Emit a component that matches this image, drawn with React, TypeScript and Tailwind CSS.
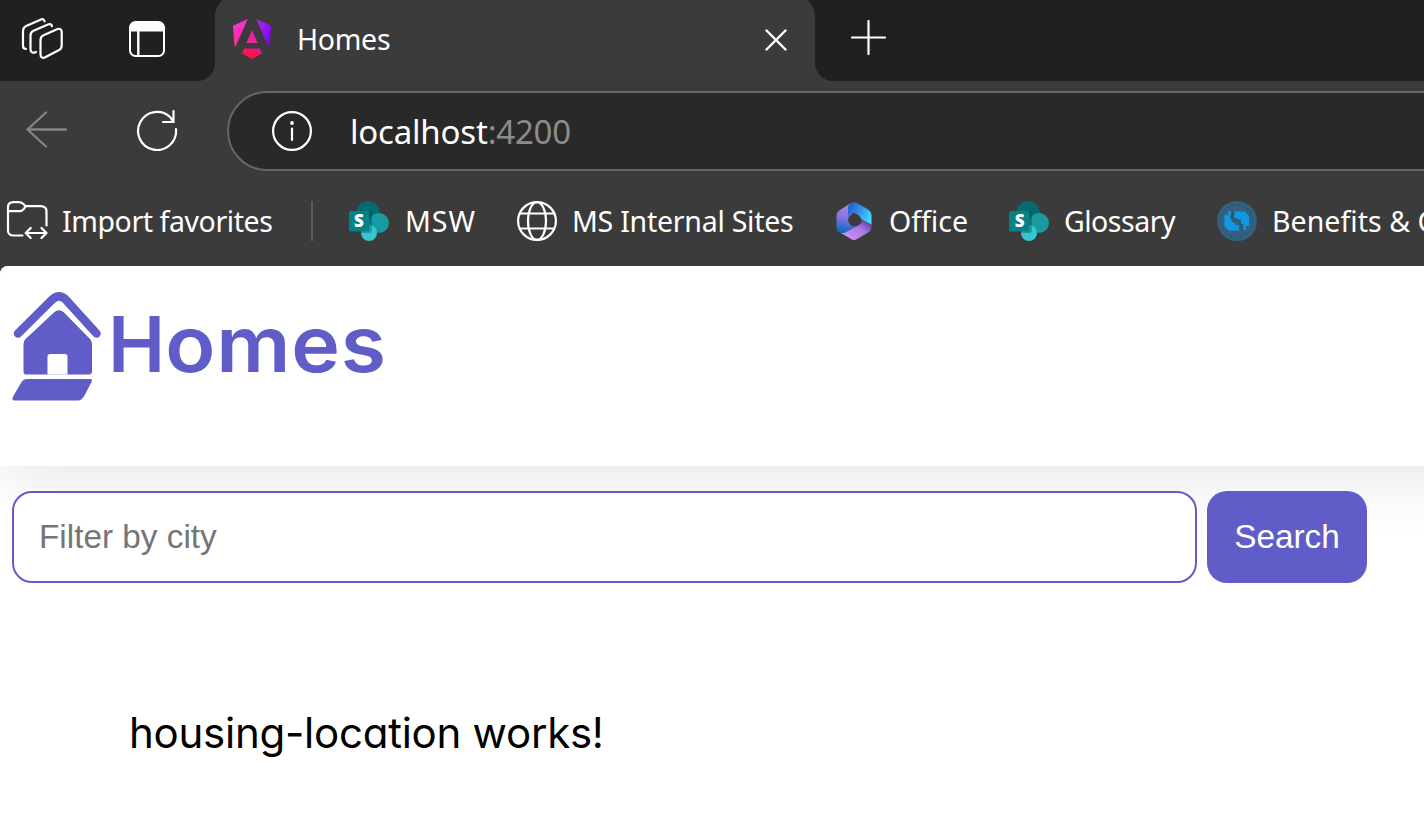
import React from "react";

function WorkspacesIcon() {
  return (
    <svg className="block shrink-0" width="42" height="42" viewBox="0 0 42 42" fill="none" stroke="white" strokeWidth="2.200" strokeLinecap="round" strokeLinejoin="round">
      <path d="M5 31C3 31 2 29.500 2 27.500V13c0-2.500 1-4 3.200-5L20 1.500c2-.8 3-.2 3.500 1.800" />
      <path d="M15 34c-2.500 1.500-5.500.5-5.500-2.500V17.500c0-2.300 1-3.800 3-4.700L27 6.500c2-.9 3.600-.4 4 1.700" />
      <path d="M19.500 22c0-2.300 1-3.900 3-4.800L36 11.200c2.700-1.200 4.700.2 4.700 2.900V27.500c0 2.300-1 3.800-3 4.700L24.200 39.300c-2.800 1.300-4.700 0-4.700-3z" />
    </svg>
  );
}

function VerticalTabsIcon() {
  return (
    <svg className="block shrink-0" width="36" height="36" viewBox="0 0 36 36" fill="none">
      <rect x="1" y="1" width="34" height="34" rx="5.500" stroke="white" strokeWidth="2" />
      <path d="M1 6.500C1 3 3 1 6.500 1h23C33 1 35 3 35 6.500V10.500H1z" fill="white" />
      <path d="M9.300 10v25" stroke="white" strokeWidth="2.400" />
    </svg>
  );
}

function AngularIcon() {
  return (
    <svg className="block shrink-0" width="38" height="40" viewBox="0 0 38 40">
      <defs>
        <linearGradient id="ng-a" x1="0" y1="0" x2=".3" y2="1">
          <stop offset="0" stopColor="#f637e8" />
          <stop offset="1" stopColor="#fa2a8a" />
        </linearGradient>
        <linearGradient id="ng-b" x1="0" y1="0" x2="1" y2="1">
          <stop offset="0" stopColor="#b62af0" />
          <stop offset="1" stopColor="#6c00f5" />
        </linearGradient>
        <linearGradient id="ng-c" x1="0" y1="1" x2="1" y2="0">
          <stop offset="0" stopColor="#ff0a58" />
          <stop offset=".6" stopColor="#fa1550" />
          <stop offset="1" stopColor="#c01abf" />
        </linearGradient>
        <linearGradient id="ng-d" x1="0" y1="1" x2="1" y2="0">
          <stop offset="0" stopColor="#fb2388" />
          <stop offset="1" stopColor="#d21fc0" />
        </linearGradient>
      </defs>
      <path d="M0 6.700L14.700 0 2.500 27.700 1.300 26z" fill="url(#ng-a)" />
      <path d="M23.300 0L38 6.700 36.700 26 35.500 27.700z" fill="url(#ng-b)" />
      <path d="M11 29.500H27L29 34.500 19 40 9 34.500z" fill="url(#ng-c)" />
      <path d="M19 11L24.700 24H13.300z" fill="url(#ng-d)" />
    </svg>
  );
}

function SharePointIcon() {
  return (
    <svg className="block shrink-0" width="40" height="40" viewBox="0 0 40 40">
      <circle cx="19" cy="11.500" r="11.500" fill="#036c70" />
      <circle cx="30" cy="22" r="10" fill="#1a9ba1" />
      <circle cx="20" cy="32" r="8" fill="#37c6d0" />
      <path d="M9 10h12.500a1.500 1.500 0 0 1 1.500 1.500V30a2 2 0 0 1-2 2H12z" fill="#000" opacity=".22" />
      <rect y="10" width="20.500" height="20.500" rx="1.500" fill="#038387" />
      <text x="10.300" y="26" textAnchor="middle" fontFamily="Open Sans, sans-serif" fontWeight="800" fontSize="17" fill="white">S</text>
    </svg>
  );
}

function GlobeIcon() {
  return (
    <svg className="block shrink-0" width="40" height="40" viewBox="0 0 40 40" fill="none" stroke="white" strokeWidth="2.200">
      <circle cx="20" cy="20" r="18.900" />
      <ellipse cx="20" cy="20" rx="9" ry="18.900" />
      <path d="M2.500 12.500h35M2.500 27.500h35" />
    </svg>
  );
}

function OfficeIcon() {
  return (
    <svg className="block shrink-0" width="36" height="38" viewBox="0 0 36 38">
      <defs>
        <linearGradient id="of-a" x1=".6" y1="0" x2=".5" y2="1">
          <stop offset="0" stopColor="#b58af0" />
          <stop offset=".5" stopColor="#8574dc" />
          <stop offset=".95" stopColor="#1268cc" />
        </linearGradient>
        <linearGradient id="of-b" x1="0" y1="0.200" x2="1" y2=".7">
          <stop offset="0" stopColor="#1f5fca" />
          <stop offset=".5" stopColor="#3894e8" />
          <stop offset="1" stopColor="#45dcff" />
        </linearGradient>
        <linearGradient id="of-c" x1="1" y1="0.100" x2=".2" y2=".8">
          <stop offset="0" stopColor="#4c358f" />
          <stop offset=".45" stopColor="#a676df" />
          <stop offset="1" stopColor="#c98ff5" />
        </linearGradient>
      </defs>
      <path d="M15 1L4 8Q.5 10 .5 14V25Q.5 29 4 30.500Q7 32 10 30L21 24 15 18 16 10z" fill="url(#of-a)" />
      <path d="M14 1.500Q18-.8 22 1.500L32 7.500Q35.500 9.500 35.500 14V23L25 17 18 10.500 12 14V6Q12 3 14 1.500z" fill="url(#of-b)" />
      <path d="M26 17.500L35.500 22.500V25Q35.500 28.500 32 30.500L21 37Q18 38.800 15 37L5 31Q8 31.500 11 29.500L22 23.500Q26 21.500 26 17.500z" fill="url(#of-c)" />
      <circle cx="18.500" cy="18" r="6.300" fill="#3b3b3b" />
    </svg>
  );
}

function BenefitsIcon() {
  return (
    <svg className="block shrink-0" width="40" height="40" viewBox="0 0 40 40">
      <circle cx="20" cy="20" r="20" fill="#34617f" />
      <circle cx="20" cy="20" r="16" fill="none" stroke="#2c587a" strokeWidth="1.500" strokeDasharray="3 2" />
      <path d="M15.500 10V16L18 19.500H22L25 23V30" fill="none" stroke="#2c587a" strokeWidth="3" />
      <g fill="#0a9be3">
        <path d="M14 10H11.500V14H7.500V25L11.500 29.500H22V24H18V21.500H14.500V18H13V14H14z" />
        <path d="M17.500 10.500H28L32 15.500V25H29V29H26.500V23H24V18.500H20.500V17H17V14.500H17.500z" />
      </g>
    </svg>
  );
}

function ImportIcon() {
  return (
    <svg className="block shrink-0" width="42" height="40" viewBox="0 0 42 40" fill="none" stroke="white" strokeWidth="2.200" strokeLinecap="round" strokeLinejoin="round">
      <path d="M16.500 34.500H7.500C4 34.500 2 32.500 2 29.500V6.500C2 3 4 1.200 7.500 1.200H13c2.500 0 3.800 1 5 2.300L19.700 5.200H34.500c4 0 6 2 6 5.500V24.500" />
      <path d="M2 10.200h12c1.500 0 2.500-.8 3.500-1.900L19.700 5.200" />
      <path d="M19.700 32H40.500M24.700 27L19.700 32 24.700 37M35.500 27L40.500 32 35.500 37" />
    </svg>
  );
}

function HomeLogo() {
  return (
    <svg className="block shrink-0" width="89" height="111" viewBox="0 0 89 111" fill="#605dc8">
      <path d="M6 42.500L40.500 8.300Q47 2.500 53.500 8.300L84.500 42.500" fill="none" stroke="#605dc8" strokeWidth="8.500" strokeLinecap="round" strokeLinejoin="round" />
      <path d="M42.500 21Q47 17.500 51.500 21L78 48Q80 50 80 53V80.500Q80 83.500 77 83.500H55.500V65.500Q55.500 63 53 63H38Q35.500 63 35.500 65.500V83.500H14Q11.500 83.500 11.500 80.500V53Q11.500 50 13.500 48z" />
      <path d="M35 83.500h21" stroke="#605dc8" strokeOpacity=".25" strokeWidth="1" />
      <path d="M15 88H78Q81 88 79.500 91L73 103.500Q70 109.500 66 109.500H3Q-.5 109.500 .8 106L9 92Q11 88 15 88z" />
    </svg>
  );
}

function Favorite({ icon, label, className }: { icon: React.ReactNode; label: string; className: string }) {
  return (
    <div className={`flex shrink-0 items-center ${className}`}>
      {icon}
      <span className="whitespace-nowrap pt-px">{label}</span>
    </div>
  );
}

export default function App() {
  return (
    <div className="flex h-[832px] w-[1424px] flex-col overflow-hidden bg-[#3b3b3b] font-['Noto_Sans',sans-serif] text-white">
      <div className="flex h-[81px] shrink-0">
        <div className="flex w-[215px] shrink-0 gap-[66px] rounded-br-[18px] bg-[#202020] pl-[21px]">
          <div className="pt-[18px]"><WorkspacesIcon /></div>
          <div className="pt-[21px]"><VerticalTabsIcon /></div>
        </div>
        <div className="w-[600px] shrink-0 overflow-hidden bg-[#202020]">
          <div className="-mt-1 flex h-[85px] items-center rounded-t-[20px] bg-[#3b3b3b] pl-[18px] pr-[28px]">
            <AngularIcon />
            <span className="ml-[26px] grow pt-0.5 text-[28.500px] leading-none tracking-[-0.3px]">Homes</span>
            <svg className="mt-0.5 block" width="22" height="22" viewBox="0 0 22 22" stroke="white" strokeWidth="2.400" strokeLinecap="round">
              <path d="M1.500 1.500l19 19M20.500 1.500l-19 19" />
            </svg>
          </div>
        </div>
        <div className="grow rounded-bl-[18px] bg-[#202020] pl-9 pt-5">
          <svg className="block" width="35" height="35" viewBox="0 0 35 35" stroke="white" strokeWidth="2.200" strokeLinecap="round">
            <path d="M1 17.500h33M17.500 1v33" />
          </svg>
        </div>
      </div>

      <div className="flex h-[90px] shrink-0 pt-[10px]">
        <div className="flex w-[227px] shrink-0 items-center gap-[68px] pl-[26px]">
          <svg className="-mt-1 block" width="42" height="37" viewBox="0 0 42 37" fill="none" stroke="#858585" strokeWidth="2.300" strokeLinecap="round" strokeLinejoin="round">
            <path d="M20 1.500L1.500 18.500 20 35.500M1.500 18.500H40" />
          </svg>
          <svg className="-mt-0.5 block" width="42" height="42" viewBox="0 0 42 42" fill="none" stroke="white" strokeWidth="2.200" strokeLinecap="round">
            <path d="M40 20A19 19 0 1 1 34.500 8.500L37 12.500M37.500 2V13H27" />
          </svg>
        </div>
        <div className="-mr-1 flex h-20 grow items-center rounded-l-full border-2 border-[#676767] bg-[#292929] pl-[43px]">
          <svg className="block" width="40" height="40" viewBox="0 0 40 40" fill="none" stroke="white" strokeWidth="2.200" strokeLinecap="round">
            <circle cx="20" cy="20" r="18.900" />
            <path d="M20 17.500v11.500" />
            <circle cx="20" cy="12" r="1.900" fill="white" stroke="none" />
          </svg>
          <span className="ml-[38px] text-[33px] leading-none tracking-[-0.2px]">localhost<span className="text-[#8c8c8c]">:4200</span></span>
        </div>
      </div>

      <div className="flex h-[95px] shrink-0 items-center overflow-hidden pl-[6px] pt-[4px] text-[28.500px] leading-none">
        <Favorite className="w-[305px] gap-[14px] tracking-[-0.42px]" icon={<ImportIcon />} label="Import favorites" />
        <div className="h-10 w-[2px] shrink-0 bg-[#5c5c5c]" />
        <Favorite className="ml-[36px] w-[168px] gap-[16px] tracking-[1px]" icon={<SharePointIcon />} label="MSW" />
        <Favorite className="w-[319px] gap-[15px] tracking-[-0.25px]" icon={<GlobeIcon />} label="MS Internal Sites" />
        <Favorite className="w-[173px] gap-[17px]" icon={<OfficeIcon />} label="Office" />
        <Favorite className="w-[208px] gap-[15px] tracking-[-0.5px]" icon={<SharePointIcon />} label="Glossary" />
        <Favorite className="gap-[15px] tracking-[0.050px]" icon={<BenefitsIcon />} label="Benefits & C" />
      </div>

      <div className="grow overflow-hidden rounded-tl-[8px] bg-white">
        <header className="flex h-[200px] w-[1700px] bg-white pl-3 pt-[25px] shadow-[0_12px_62px_rgba(0,0,0,0.1)]">
          <HomeLogo />
          <span className="ml-[7px] mt-[13px] origin-left scale-x-[1.07] font-[Inter,sans-serif] text-[77px] font-semibold leading-[80px] text-[#605dc8]">
            <span className="inline-block origin-left scale-x-[0.93] -mr-[4px]">H</span>
            <span className="tracking-[0.800px]">omes</span>
          </span>
        </header>
        <form className="relative flex gap-[10px] pl-3 pt-[25px]" onSubmit={(e) => e.preventDefault()}>
          <input
            type="text"
            placeholder="Filter by city"
            className="h-[92px] w-[1185px] rounded-[20px] border-2 border-[#605dc8] bg-white px-[25px] font-['Liberation_Sans',sans-serif] text-[33.333px] text-black outline-none placeholder:text-[#757575] placeholder:opacity-100"
          />
          <button type="button" className="h-[92px] w-[160px] rounded-[20px] bg-[#605dc8] font-['Liberation_Sans',sans-serif] text-[33.333px] text-white">Search</button>
        </form>
        <p className="ml-[129px] mt-[120px] font-[Inter,sans-serif] text-[42px] leading-[60px] tracking-[-0.25px] text-black [font-feature-settings:'cv11']">housing-location works!</p>
      </div>
    </div>
  );
}
